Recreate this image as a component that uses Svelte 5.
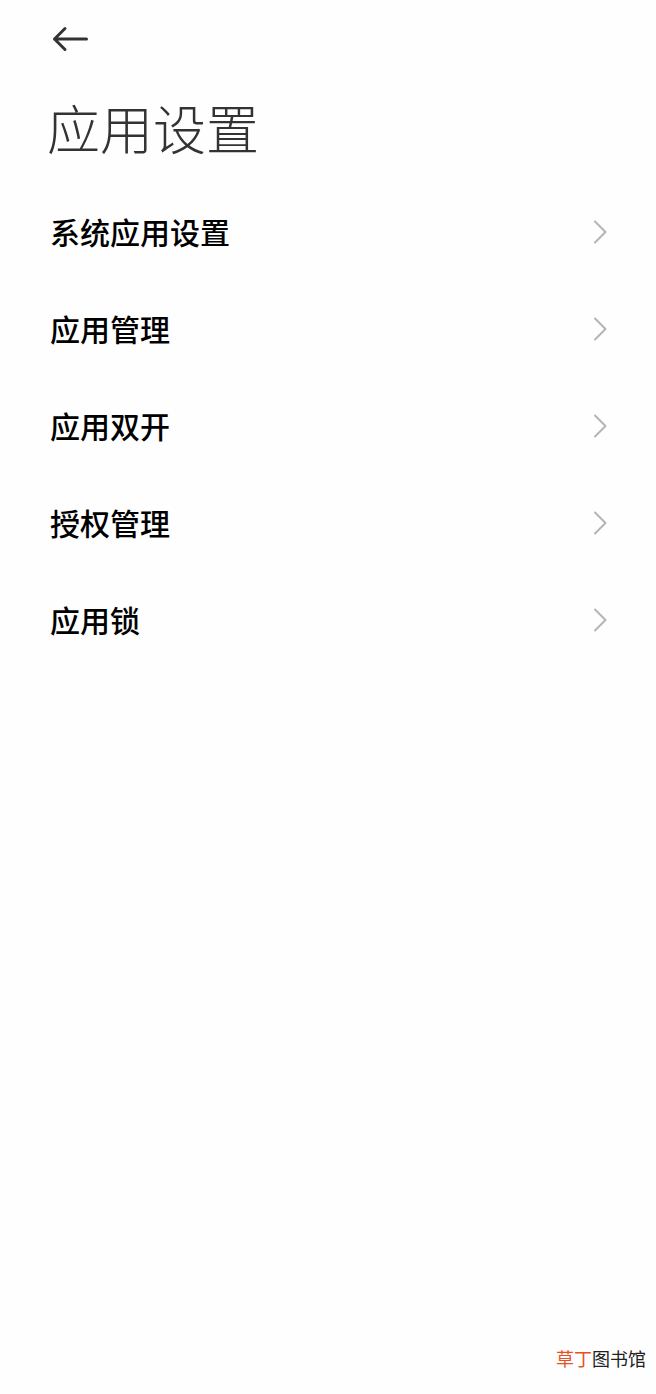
<script>
	const items = ['系统应用设置', '应用管理', '应用双开', '授权管理', '应用锁'];
</script>

<div class="page">
	<header>
		<button class="back" type="button" aria-label="返回">
			<svg width="38" height="28" viewBox="0 0 38 28" aria-hidden="true">
				<path d="M14 3.5 3.5 14 14 24.5M3.5 14H35.5" />
			</svg>
		</button>
		<h1>应用设置</h1>
	</header>

	<main>
		<ul>
			{#each items as item}
				<li>
					<a href="#settings">
						<span>{item}</span>
						<svg width="16" height="26" viewBox="0 0 16 26" aria-hidden="true">
							<path d="M3 2.5 13.5 13 3 23.5" />
						</svg>
					</a>
				</li>
			{/each}
		</ul>
	</main>

	<footer><span>草丁</span>图书馆</footer>
</div>

<style>
	:global(body) {
		margin: 0;
		background: #fefefe;
	}
	.page {
		display: flex;
		flex-direction: column;
		box-sizing: border-box;
		min-height: 100vh;
		font-family: 'Noto Sans CJK SC', sans-serif;
		color: #000;
	}
	header {
		padding: 25px 47px 0;
	}
	.back {
		display: block;
		margin: 0 0 0 4px;
		padding: 0;
		border: none;
		background: none;
		cursor: pointer;
	}
	svg {
		display: block;
		fill: none;
		stroke-linecap: round;
		stroke-linejoin: round;
	}
	.back svg {
		stroke: #333;
		stroke-width: 3;
	}
	h1 {
		margin: 34px 0 0;
		font-size: 53px;
		line-height: 80px;
		font-weight: 300;
		color: #333;
	}
	ul {
		margin: 16px 0 0;
		padding: 0;
		list-style: none;
	}
	li a {
		display: flex;
		align-items: center;
		justify-content: space-between;
		height: 97px;
		padding: 0 48px 0 50px;
		font-size: 30px;
		line-height: 44px;
		font-weight: 500;
		color: #000;
		text-decoration: none;
	}
	li span {
		padding-bottom: 2px;
	}
	li svg {
		stroke: #b4b4b4;
		stroke-width: 2;
	}
	footer {
		margin-top: auto;
		padding: 0 10px 22px;
		font-size: 18px;
		line-height: 27px;
		text-align: right;
		color: #222;
	}
	footer span {
		color: #e8501e;
	}
</style>
